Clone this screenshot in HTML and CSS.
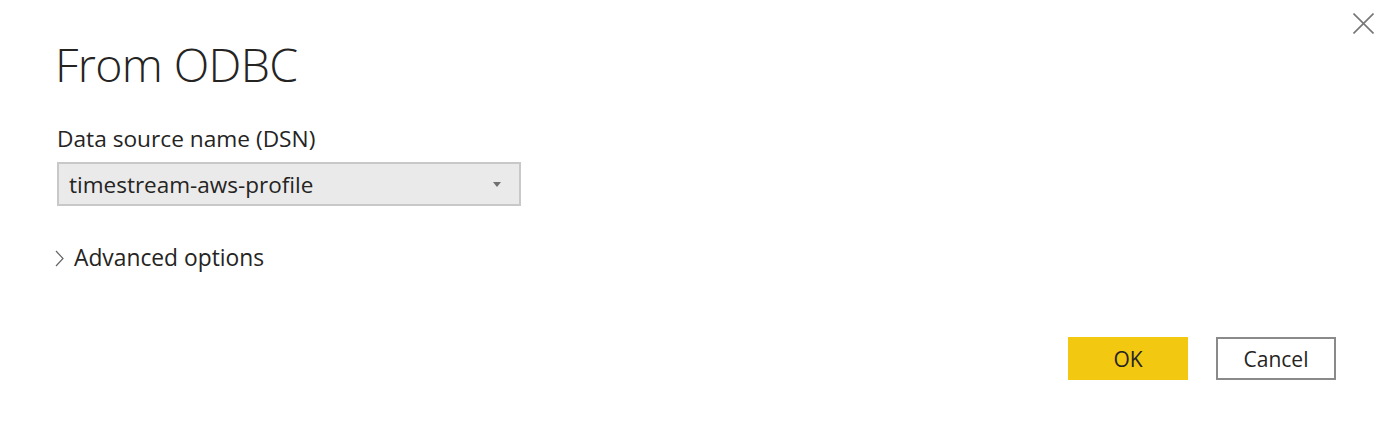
FILE: index.html
```html
<!DOCTYPE html>
<html lang="en">
<head>
<meta charset="utf-8">
<title>From ODBC</title>
<link rel="stylesheet" href="styles.css">
</head>
<body>
<div class="dialog">
  <button class="close" aria-label="Close">
    <svg width="21" height="21" viewBox="0 0 21 21"><path d="M0.5 0.5 L20.5 20.5 M20.5 0.5 L0.5 20.5" stroke="#777" stroke-width="1.6" fill="none"/></svg>
  </button>
  <h1 class="title">From ODBC</h1>
  <div class="label">Data source name (DSN)</div>
  <div class="select">
    <span class="select-text">timestream-aws-profile</span>
    <svg class="caret" width="8" height="5" viewBox="0 0 8 5"><path d="M0 0 H8 L4 5 Z" fill="#707070"/></svg>
  </div>
  <div class="advanced">
    <svg class="chevron" width="9" height="17" viewBox="0 0 9 17"><path d="M1 1 L8 8.5 L1 16" stroke="#666" stroke-width="1.2" fill="none"/></svg>
    <span>Advanced options</span>
  </div>
  <div class="actions">
    <button class="btn btn-primary">OK</button>
    <button class="btn btn-secondary">Cancel</button>
  </div>
</div>
</body>
</html>
```
FILE: styles.css
```css
html, body {
  margin: 0;
  padding: 0;
  background: #ffffff;
}
body {
  font-family: "Open Sans", "Noto Sans", sans-serif;
  color: #252423;
}
.dialog {
  position: relative;
  width: 1381px;
  height: 428px;
  box-sizing: border-box;
  padding: 32px 45px 0 57px;
  display: flex;
  flex-direction: column;
  align-items: flex-start;
}
.close {
  position: absolute;
  top: 13px;
  left: 1353px;
  width: 21px;
  height: 21px;
  padding: 0;
  border: 0;
  background: transparent;
  display: block;
}
.close svg { display: block; }
.title {
  margin: 0 0 0 -2px;
  font-weight: 300;
  font-size: 46.5px;
  line-height: 64px;
  letter-spacing: -0.65px;
  color: #252423;
}
.label {
  margin-top: 29px;
  font-size: 22.7px;
  line-height: 28px;
  color: #252423;
}
.select {
  margin-top: 9px;
  width: 464px;
  height: 44px;
  box-sizing: border-box;
  border: 2px solid #c8c8c8;
  background: #eaeaea;
  display: flex;
  align-items: center;
  padding: 0 18px 0 10px;
}
.select-text {
  flex: 1;
  font-size: 22.5px;
  color: #252423;
}
.caret { display: block; }
.advanced {
  margin-top: 38px;
  display: flex;
  align-items: center;
  gap: 10px;
  font-size: 22.8px;
  line-height: 28px;
  color: #252423;
}
.chevron { display: block; margin-left: -2px; }
.actions {
  margin-top: 65px;
  align-self: flex-end;
  display: flex;
  gap: 28px;
}
.btn {
  width: 120px;
  height: 43px;
  box-sizing: border-box;
  font-family: inherit;
  font-size: 21px;
  color: #252423;
  padding: 0;
  cursor: pointer;
}
.btn-primary {
  background: #f2c811;
  border: 0;
}
.btn-secondary {
  background: #ffffff;
  border: 2px solid #8a8a8a;
}
```
